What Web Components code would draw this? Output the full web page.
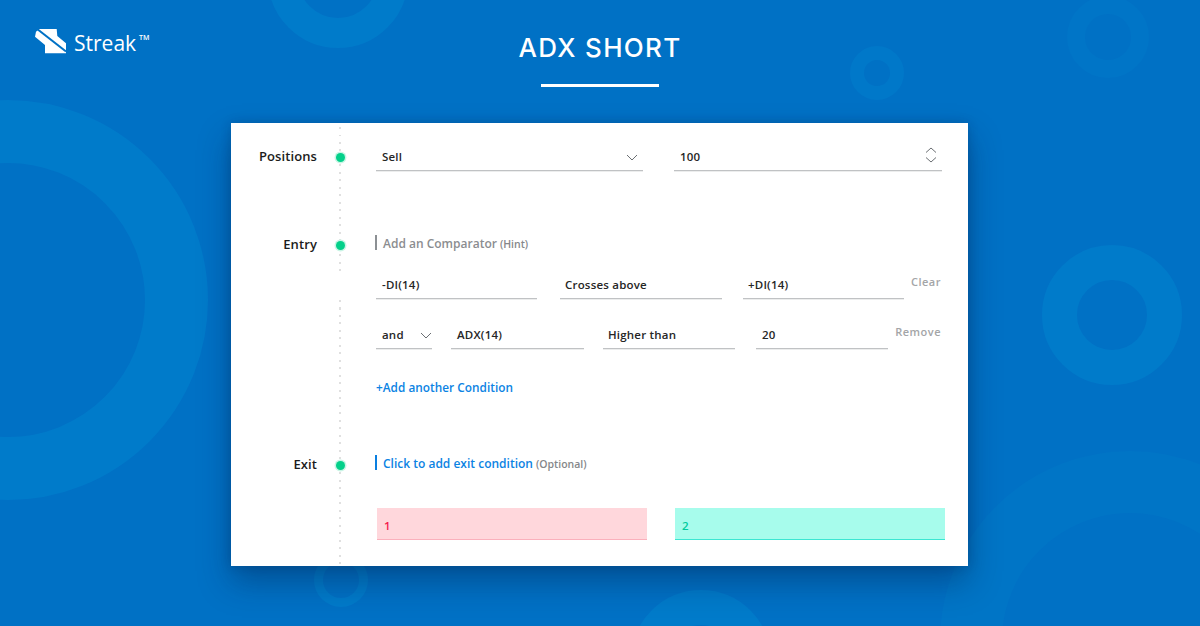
<!DOCTYPE html>
<html lang="en"><head><meta charset="utf-8"><title>ADX Short</title>
<style>
html,body{margin:0;padding:0;width:1200px;height:626px;overflow:hidden;background:#0071c5;font-family:"Open Sans",sans-serif}
</style></head><body>
<streak-page>
  <streak-logo slot="logo"></streak-logo>
  <span slot="title">ADX SHORT</span>
  <strategy-card slot="card">
    <section-row label="Positions" style="height:59px">
      <div style="display:flex;gap:31px">
        <form-field value="Sell" icon="down" style="width:267px"></form-field>
        <form-field value="100" icon="updown" style="width:268px"></form-field>
      </div>
    </section-row>
    <section-row label="Entry" style="margin-top:29px;height:40px">
      <hint-line tone="gray"><span>Add an Comparator</span><small>(Hint)</small></hint-line>
    </section-row>
    <condition-row action="Clear">
      <form-field value="-DI(14)" style="width:161px"></form-field>
      <form-field value="Crosses above" style="width:162px;margin-left:23px;padding-left:5px"></form-field>
      <form-field value="+DI(14)" style="width:161px;margin-left:21px;padding-left:5px"></form-field>
    </condition-row>
    <condition-row action="Remove" style="margin-top:24px">
      <form-field value="and" icon="down" icon-flush style="width:56px"></form-field>
      <form-field value="ADX(14)" style="width:133px;margin-left:19px"></form-field>
      <form-field value="Higher than" style="width:132px;margin-left:19px;padding-left:5px"></form-field>
      <form-field value="20" style="width:132px;margin-left:21px"></form-field>
    </condition-row>
    <add-link>+Add another Condition</add-link>
    <section-row label="Exit" style="margin-top:56px;height:55px">
      <hint-line tone="blue"><span>Click to add exit condition</span><small>(Optional)</small></hint-line>
    </section-row>
    <result-row>
      <result-box tone="red">1</result-box>
      <result-box tone="green">2</result-box>
    </result-row>
  </strategy-card>
</streak-page>
<script>
function def(name, css, html){
  customElements.define(name, class extends HTMLElement{
    connectedCallback(){
      if(this.shadowRoot) return;
      const r=this.attachShadow({mode:"open"});
      const h=typeof html==="function"?html(this):html;
      r.innerHTML="<style>"+css+"</style>"+h;
    }
  });
}
const ring=(c,x,y,R,r,col)=>`<circle cx="${x}" cy="${y}" r="${(R+r)/2}" fill="none" stroke="${col}" stroke-width="${R-r}"/>`;
def("streak-page",`
:host{display:block;position:relative;width:1200px;height:626px;overflow:hidden;background:#0071c5;color:#fff}
.bg{position:absolute;inset:0;width:1200px;height:626px}
.content{position:relative;display:flex;flex-direction:column;align-items:center;height:626px}
header{width:100%;height:123px;position:relative;display:flex;flex-direction:column;align-items:center}
h1{margin:28px 0 0;font:500 26px/40px Inter,"Open Sans",sans-serif;letter-spacing:1.3px;color:#fff}
.rule{width:118px;height:3px;background:#fff;margin-top:16px}
.logo{position:absolute;left:35px;top:28px}
`,`
<svg class="bg" viewBox="0 0 1200 626" aria-hidden="true">
${ring(0,8,300,200,137,"#007bca")}
${ring(0,338,-22,70,40,"#007bca")}
${ring(0,877,73,27,13,"#0078c9")}
${ring(0,1108,37,41,23,"#0075c7")}
${ring(0,1112,315,70,35,"#007bca")}
${ring(0,1130,641,190,128,"#0075c6")}
${ring(0,701,660,70,35,"#007bca")}
${ring(0,341,580,27,18,"#007bca")}
</svg>
<div class="content"><header><div class="logo"><slot name="logo"></slot></div><h1><slot name="title"></slot></h1><div class="rule"></div></header><slot name="card"></slot></div>`);
def("streak-logo",`:host{display:flex;align-items:flex-start}
svg{display:block}
.t{font:400 21px/28px "Open Sans",sans-serif;color:#fff;margin:1px 0 0 8px;white-space:nowrap}
sup{font:600 7px/1 "Open Sans",sans-serif;position:relative;top:-11px;margin-left:3px;vertical-align:baseline}`,
`<svg width="31" height="26" viewBox="0 0 31 26" aria-hidden="true"><path d="M4.3 1H21.7L22.3 8L31 15.3V25.3H10V17L0 8.7L1 3.7Z" fill="#fff"/><path d="M1.5 .5L31 23.5" stroke="#0071c5" stroke-width="2" fill="none"/></svg><div class="t">Streak<sup>TM</sup></div>`);
def("strategy-card",`
:host{display:block;position:relative;box-sizing:border-box;width:737px;height:443px;background:#fff;box-shadow:0 16px 30px rgba(0,30,70,.38),0 0 10px rgba(0,30,70,.2);padding-top:22px;margin-left:-1px;color:#1a1a1a}
.dots{position:absolute;left:108px;width:2px;background:repeating-linear-gradient(to bottom,#e0e0e0 0 2px,transparent 2px 7.5px)}
.a{top:4px;height:146px}.b{top:177px;height:266px}
`,`<div class="dots a"></div><div class="dots b"></div><slot></slot>`);
def("section-row",`
:host{display:flex;align-items:flex-start;position:relative}
.l{width:86px;text-align:right;font:600 13px/23px "Open Sans",sans-serif;color:#1c1c1c;letter-spacing:.1px}
.t{width:59px;flex:none;position:relative;height:24px}
.d{position:absolute;left:19px;top:8px;width:9px;height:9px;border-radius:50%;background:#04d08a;box-shadow:0 0 0 1.5px #c9f5e5}
.c{flex:1;min-width:0}
`,h=>`<div class="l">${h.getAttribute("label")}</div><div class="t"><div class="d"></div></div><div class="c"><slot></slot></div>`);
def("form-field",`
:host{display:block;flex:none;box-sizing:border-box;height:26px;border-bottom:1px solid #c0c2c4;box-shadow:0 1px 0 #eceded;position:relative;font:600 11.5px/23px "Open Sans",sans-serif;color:#262626;padding-left:6px;letter-spacing:.2px}
svg{position:absolute;right:5px;top:6px}
:host([icon-flush]) svg{right:0}
`,h=>{const i=h.getAttribute("icon");let s="";
 if(i==="down")s=`<svg width="12" height="12" viewBox="0 0 12 12" aria-hidden="true"><path d="M1 4l5 5 5-5" fill="none" stroke="#6b6f73" stroke-width="1"/></svg>`;
 if(i==="updown")s=`<svg style="top:2px" width="12" height="16" viewBox="0 0 12 16" aria-hidden="true"><path d="M1 5.5l5-4.5 5 4.5M1 10.5l5 4.5 5-4.5" fill="none" stroke="#6b6f73" stroke-width="1"/></svg>`;
 return h.getAttribute("value")+s;});
def("hint-line",`
:host{display:flex;align-items:baseline;height:22px;font:600 12px/22px "Open Sans",sans-serif;position:relative;padding-left:8px;margin-left:-1px}
:host::before{content:"";position:absolute;left:0;top:2px;width:2px;height:15px;background:var(--bar)}
:host([tone=gray]){--bar:#8c9094;color:#8b8d90}
:host([tone=blue]){--bar:#0a7fe0;color:#0b83e3}
::slotted(small){font-size:10.5px;color:#85878a;margin-left:3px;font-weight:600}
`,`<slot></slot>`);
def("condition-row",`
:host{display:flex;align-items:flex-start;position:relative;box-sizing:border-box;padding-left:145px;width:710px}
.a{position:absolute;right:0;top:0;font:600 11px/18px "Open Sans",sans-serif;color:#a3a5a7;letter-spacing:.5px}
`,h=>`<slot></slot><div class="a">${h.getAttribute("action")}</div>`);
def("add-link",`:host{display:block;margin:28px 0 0 145px;font:600 11.8px/20px "Open Sans",sans-serif;color:#0b83e3;letter-spacing:.03px}`,`<slot></slot>`);
def("result-row",`:host{display:flex;gap:28px;padding-left:146px}`,`<slot></slot>`);
def("result-box",`
:host{display:block;box-sizing:border-box;width:270px;height:32px;padding:8px 0 0 7px;font:600 11.5px/20px "Open Sans",sans-serif}
:host([tone=red]){background:#ffd7dc;color:#f5204f;border-bottom:1px solid #fbb0bc}
:host([tone=green]){background:#a7fcec;color:#00cb9c;border-bottom:1px solid #3ce6d2}
`,`<slot></slot>`);
</script>
</body></html>
